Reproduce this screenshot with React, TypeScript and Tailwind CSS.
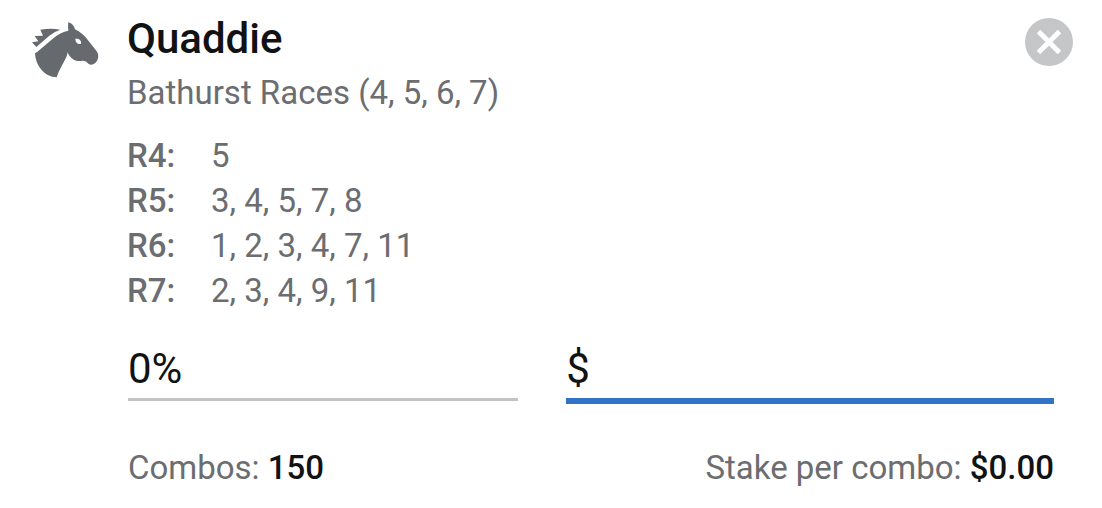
interface Leg {
  race: string
  runners: number[]
}

interface BetCardProps {
  title: string
  subtitle: string
  legs: Leg[]
  combos: number
  stakePerCombo: string
}

const legs: Leg[] = [
  { race: 'R4', runners: [5] },
  { race: 'R5', runners: [3, 4, 5, 7, 8] },
  { race: 'R6', runners: [1, 2, 3, 4, 7, 11] },
  { race: 'R7', runners: [2, 3, 4, 9, 11] },
]

function HorseIcon() {
  return (
    <svg viewBox="36 36 201 168" className="h-14 w-[67px] text-[#66696e]" fill="currentColor" aria-hidden="true">
      <path d="M61 59 Q92 53 121 59 Q102 65 88 77 L49 111 L36 97 L55 94 L44 78 L69 77 Z" />
      <path
        fillRule="evenodd"
        d="M145 37 C152 38 162 46 165 58 C182 66 195 78 204 91 L229 122 Q237 132 234 145 C231 155 224 164 214 164 C207 164 205 160 199 155 C190 150 181 154 172 153 C159 151 148 141 143 127 C141 146 120 172 110 202 C75 201 47 169 45 130 Q53 126 61 118 L102 83 Q122 67 145 62 Q143 49 145 37 Z M166 86 C166 95 171 103 183 102 C185 91 178 85 166 86 Z"
      />
    </svg>
  )
}

function BetCard({ title, subtitle, legs, combos, stakePerCombo }: BetCardProps) {
  return (
    <article className="flex items-start bg-white pl-8 pr-[29px] pt-[14px] pb-[18px] font-[Roboto,sans-serif] text-[33px] leading-[45px] text-[#6b6d70]">
      <div className="w-[95px] shrink-0 pt-2">
        <HorseIcon />
      </div>
      <div className="min-w-0 flex-1">
        <header className="flex items-start justify-between">
          <div>
            <h2 className="text-[42px] leading-[50px] font-medium text-[#111214]">{title}</h2>
            <p className="mt-[6px]">{subtitle}</p>
          </div>
          <button
            type="button"
            aria-label="Remove bet"
            className="mt-1 flex size-12 shrink-0 items-center justify-center rounded-full bg-[#c4c6c7] text-white"
          >
            <svg viewBox="0 0 24 24" className="size-6" stroke="currentColor" strokeWidth="5" aria-hidden="true">
              <path d="M1.5 1.5 22.5 22.5M22.5 1.5 1.5 22.5" />
            </svg>
          </button>
        </header>

        <dl className="mt-[18px]">
          {legs.map((leg) => (
            <div key={leg.race} className="flex">
              <dt className="w-[84px] font-medium">{leg.race}:</dt>
              <dd>{leg.runners.join(', ')}</dd>
            </div>
          ))}
        </dl>

        <div className="pl-px pr-[19px]">
          <div className="mt-[27px] grid grid-cols-[4fr_5fr] items-start gap-12 text-[42px] text-[#111214]">
            <input
              type="text"
              aria-label="Flexi percentage"
              defaultValue="0%"
              className="h-[61px] w-full min-w-0 border-b-3 border-[#c3c3c3] pb-[2px] outline-none"
            />
            <input
              type="text"
              aria-label="Stake"
              defaultValue="$"
              className="h-16 w-full min-w-0 border-b-6 border-[#3273c8] pb-[2px] outline-none"
            />
          </div>
          <div className="mt-[41px] flex flex-wrap justify-between">
            <p>
              Combos: <strong className="font-medium text-[#111214]">{combos}</strong>
            </p>
            <p>
              Stake per combo: <strong className="font-medium text-[#111214]">{stakePerCombo}</strong>
            </p>
          </div>
        </div>
      </div>
    </article>
  )
}

export default function App() {
  return (
    <BetCard
      title="Quaddie"
      subtitle="Bathurst Races (4, 5, 6, 7)"
      legs={legs}
      combos={150}
      stakePerCombo="$0.00"
    />
  )
}
